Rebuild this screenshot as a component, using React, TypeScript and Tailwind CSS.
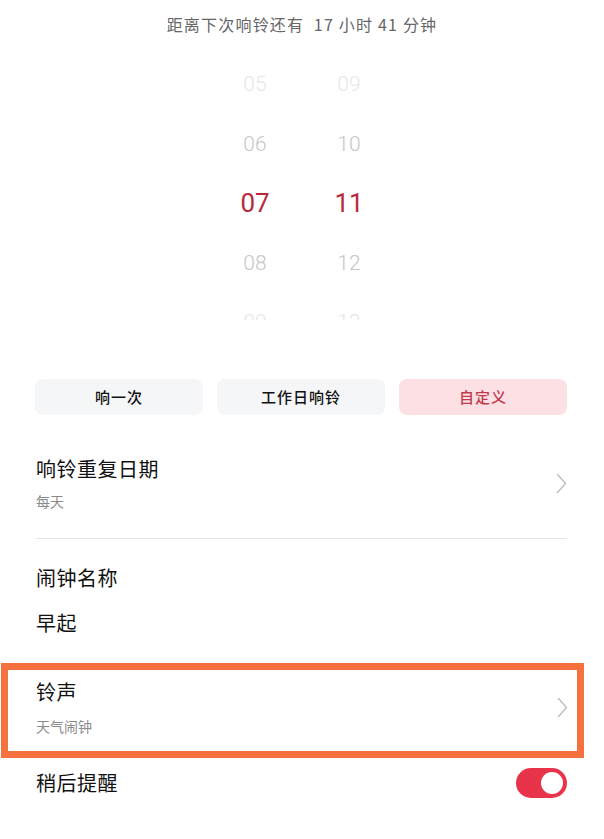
import { useState } from "react";

const cjk = { fontFamily: '"Noto Sans CJK SC", "Noto Sans", sans-serif' };
const digits = { fontFamily: 'Roboto, "Noto Sans", sans-serif' };

const hours = ["05", "06", "07", "08", "09"];
const minutes = ["09", "10", "11", "12", "13"];

// tone per row: far rows fade out, the middle row is the selected one
const rowClass = [
  "text-[21px] font-light text-[#e6e6e6]",
  "text-[21px] font-light text-[#c6c6c6]",
  "text-[26px] font-normal text-[#b8283d]",
  "text-[21px] font-light text-[#c6c6c6]",
  "text-[21px] font-light text-[#e6e6e6]",
];

const Chevron = () => (
  <svg width="11" height="21" viewBox="0 0 11 21" fill="none" className="shrink-0">
    <path d="M1.5 1.5 L9.5 10.5 L1.5 19.5" stroke="#bdbdbd" strokeWidth="1.4" strokeLinecap="round" strokeLinejoin="round" />
  </svg>
);

const Column = ({ items }: { items: string[] }) => (
  <div className="flex w-[60px] flex-col">
    {items.map((v, i) => (
      <div key={v} className={`flex h-[59.5px] shrink-0 items-center justify-center ${rowClass[i]}`} style={digits}>
        {v}
      </div>
    ))}
  </div>
);

export default function App() {
  const [mode, setMode] = useState(2);
  const [snooze, setSnooze] = useState(true);
  const modes = ["响一次", "工作日响铃", "自定义"];

  return (
    <div className="min-h-[839px] w-full bg-white" style={cjk}>
      {/* countdown */}
      <div className="flex h-[48px] items-center justify-center text-[16px] tracking-[1.2px] text-[#666]">
        距离下次响铃还有&nbsp;&nbsp;17 小时 41 分钟
      </div>

      {/* time picker, last row is clipped by the wheel window */}
      <div className="mt-[7px] flex h-[265px] justify-center gap-[34px] overflow-hidden">
        <Column items={hours} />
        <Column items={minutes} />
      </div>

      {/* repeat mode */}
      <div className="mx-[35px] mr-[37px] mt-[59px] grid grid-cols-3 gap-[14px]">
        {modes.map((m, i) => (
          <button
            key={m}
            onClick={() => setMode(i)}
            className={`h-[36px] rounded-lg text-[15px] font-medium tracking-[1px] ${
              mode === i ? "bg-[#fde0e4] text-[#c23a4f]" : "bg-[#f5f6f8] text-[#111]"
            }`}
          >
            {m}
          </button>
        ))}
      </div>

      {/* repeat days */}
      <div className="ml-[36px] mr-[37px] mt-[40px] flex items-center justify-between border-b border-[#e6e6e6] pb-[27px]">
        <div className="flex flex-col">
          <span className="text-[20px] leading-[28px] tracking-[0.5px] text-[#111]">响铃重复日期</span>
          <span className="mt-[8px] text-[14px] leading-[20px] text-[#8a8a8a]">每天</span>
        </div>
        <Chevron />
      </div>

      {/* alarm name */}
      <div className="ml-[36px] mt-[25px] flex flex-col">
        <span className="text-[20px] leading-[28px] tracking-[0.5px] text-[#111]">闹钟名称</span>
        <span className="mt-[17px] text-[20px] leading-[28px] tracking-[0.5px] text-[#111]">早起</span>
      </div>

      {/* ringtone, highlighted */}
      <div className="ml-[1px] mr-[20px] mt-[26px] border-[7px] border-[#f57140]">
        <div className="flex items-center justify-between pb-[15px] pl-[28px] pr-[9px] pt-[8px]">
          <div className="flex flex-col">
            <span className="text-[20px] leading-[28px] tracking-[0.5px] text-[#111]">铃声</span>
            <span className="mt-[10px] text-[14px] leading-[20px] text-[#8a8a8a]">天气闹钟</span>
          </div>
          <Chevron />
        </div>
      </div>

      {/* snooze */}
      <div className="ml-[36px] mr-[37px] mt-[10px] flex items-center justify-between">
        <span className="text-[20px] leading-[28px] tracking-[0.5px] text-[#111]">稍后提醒</span>
        <button
          onClick={() => setSnooze(!snooze)}
          className={`flex h-[30px] w-[51px] items-center rounded-full px-[4px] ${
            snooze ? "justify-end bg-[#e8344a]" : "justify-start bg-[#dcdcdc]"
          }`}
        >
          <span className="h-[22px] w-[22px] rounded-full bg-white" />
        </button>
      </div>
    </div>
  );
}
